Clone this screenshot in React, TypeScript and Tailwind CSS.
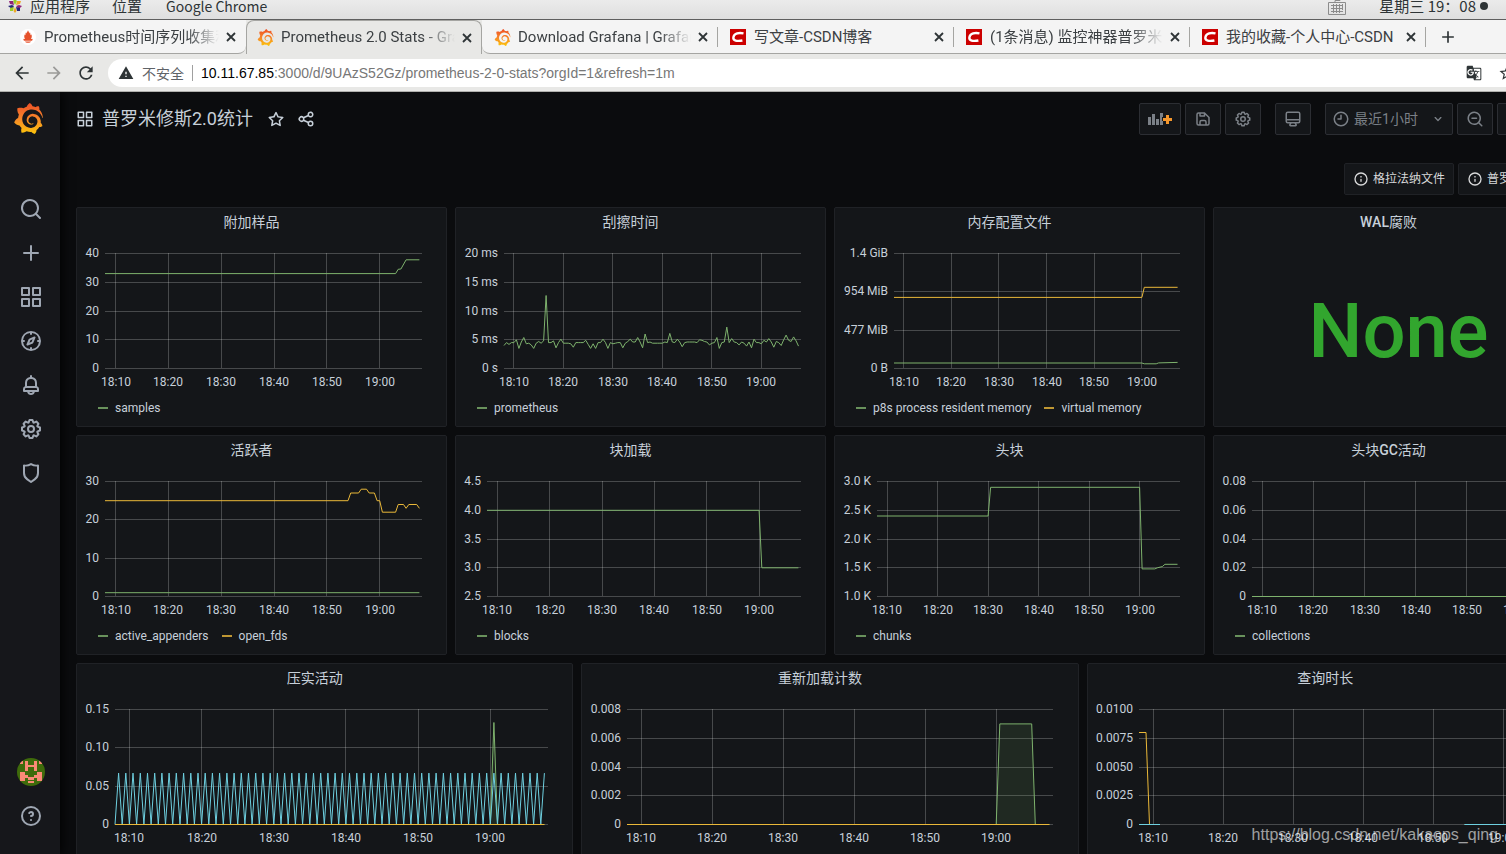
import React from "react";
import { SiGrafana } from "react-icons/si";
import { MdArrowBack, MdArrowForward, MdGTranslate, MdRefresh, MdStarBorder, MdWarning, MdAdd } from "react-icons/md";

const GREEN = "#7eb26d";
const YELLOW = "#eab839";
const BLUE = "#6ed0e0";

const icons = {
  search:
    "M21.71,20.29,18,16.61A9,9,0,1,0,16.61,18l3.68,3.68a1,1,0,0,0,1.42,0A1,1,0,0,0,21.71,20.29ZM11,18a7,7,0,1,1,7-7A7,7,0,0,1,11,18Z",
  searchMinus:
    "M21.71,20.29,18,16.61A9,9,0,1,0,16.61,18l3.68,3.68a1,1,0,0,0,1.42,0A1,1,0,0,0,21.71,20.29ZM11,18a7,7,0,1,1,7-7A7,7,0,0,1,11,18ZM14,10H8a1,1,0,0,0,0,2h6a1,1,0,0,0,0-2Z",
  plus: "M19,11H13V5a1,1,0,0,0-2,0v6H5a1,1,0,0,0,0,2h6v6a1,1,0,0,0,2,0V13h6a1,1,0,0,0,0-2Z",
  apps: "M10,13H3a1,1,0,0,0-1,1v7a1,1,0,0,0,1,1h7a1,1,0,0,0,1-1V14A1,1,0,0,0,10,13ZM9,20H4V15H9ZM21,2H14a1,1,0,0,0-1,1v7a1,1,0,0,0,1,1h7a1,1,0,0,0,1-1V3A1,1,0,0,0,21,2ZM20,9H15V4h5Zm1,4H14a1,1,0,0,0-1,1v7a1,1,0,0,0,1,1h7a1,1,0,0,0,1-1V14A1,1,0,0,0,21,13Zm-1,7H15V15h5ZM10,2H3A1,1,0,0,0,2,3v7a1,1,0,0,0,1,1h7a1,1,0,0,0,1-1V3A1,1,0,0,0,10,2ZM9,9H4V4H9Z",
  compass:
    "M12,2A10,10,0,1,0,22,12,10,10,0,0,0,12,2Zm1,17.93V19a1,1,0,0,0-2,0v.93A8,8,0,0,1,4.07,13H5a1,1,0,0,0,0-2H4.07A8,8,0,0,1,11,4.07V5a1,1,0,0,0,2,0V4.07A8,8,0,0,1,19.93,11H19a1,1,0,0,0,0,2h.93A8,8,0,0,1,13,19.93ZM15.14,7.55l-5,2.12a1,1,0,0,0-.52.52l-2.12,5a1,1,0,0,0,.21,1.1,1,1,0,0,0,.7.3.93.93,0,0,0,.4-.09l5-2.12a1,1,0,0,0,.52-.52l2.12-5a1,1,0,0,0-1.31-1.31Zm-2.49,5.1-2.28,1,1-2.28,2.28-1Z",
  bell: "M18,13.18V10a6,6,0,0,0-5-5.91V3a1,1,0,0,0-2,0V4.09A6,6,0,0,0,6,10v3.18A3,3,0,0,0,4,16v2a1,1,0,0,0,1,1H8.14a4,4,0,0,0,7.72,0H19a1,1,0,0,0,1-1V16A3,3,0,0,0,18,13.18ZM8,10a4,4,0,0,1,8,0v3H8Zm4,10a2,2,0,0,1-1.72-1h3.44A2,2,0,0,1,12,20Zm6-3H6V16a1,1,0,0,1,1-1H17a1,1,0,0,1,1,1Z",
  cog: "M21.32,9.55l-1.89-.63.89-1.78A1,1,0,0,0,20.13,6L18,3.87a1,1,0,0,0-1.15-.19l-1.78.89-.63-1.89A1,1,0,0,0,13.5,2h-3a1,1,0,0,0-.95.68L8.92,4.57,7.14,3.68A1,1,0,0,0,6,3.87L3.87,6a1,1,0,0,0-.19,1.15l.89,1.78-1.89.63A1,1,0,0,0,2,10.5v3a1,1,0,0,0,.68.95l1.89.63-.89,1.78A1,1,0,0,0,3.87,18L6,20.13a1,1,0,0,0,1.15.19l1.78-.89.63,1.89a1,1,0,0,0,.95.68h3a1,1,0,0,0,.95-.68l.63-1.89,1.78.89A1,1,0,0,0,18,20.13L20.13,18a1,1,0,0,0,.19-1.15l-.89-1.78,1.89-.63A1,1,0,0,0,22,13.5v-3A1,1,0,0,0,21.32,9.55ZM20,12.78l-1.2.4A2,2,0,0,0,17.64,16l.57,1.14-1.1,1.1L16,17.64a2,2,0,0,0-2.79,1.16l-.4,1.2H11.22l-.4-1.2A2,2,0,0,0,8,17.64l-1.14.57-1.1-1.1L6.36,16A2,2,0,0,0,5.2,13.18L4,12.78V11.22l1.2-.4A2,2,0,0,0,6.36,8L5.79,6.89l1.1-1.1L8,6.36A2,2,0,0,0,10.82,5.2l.4-1.2h1.56l.4,1.2A2,2,0,0,0,16,6.36l1.14-.57,1.1,1.1L17.64,8a2,2,0,0,0,1.16,2.79l1.2.4ZM12,8a4,4,0,1,0,4,4A4,4,0,0,0,12,8Zm0,6a2,2,0,1,1,2-2A2,2,0,0,1,12,14Z",
  shield:
    "M19.63,3.65a1,1,0,0,0-.84-.2,8,8,0,0,1-6.22-1.27,1,1,0,0,0-1.14,0A8,8,0,0,1,5.21,3.45a1,1,0,0,0-.84.2A1,1,0,0,0,4,4.43v7.45a9,9,0,0,0,3.77,7.33l3.65,2.6a1,1,0,0,0,1.16,0l3.65-2.6A9,9,0,0,0,20,11.88V4.43A1,1,0,0,0,19.63,3.65ZM18,11.88a7,7,0,0,1-2.93,5.7L12,19.77,8.93,17.58A7,7,0,0,1,6,11.88V5.58a10,10,0,0,0,6-1.39,10,10,0,0,0,6,1.39Z",
  question:
    "M11.29,15.29a1.58,1.58,0,0,0-.12.15.76.76,0,0,0-.09.18.64.64,0,0,0-.06.18,1.36,1.36,0,0,0,0,.2.84.84,0,0,0,.08.38.9.9,0,0,0,.54.54.94.94,0,0,0,.76,0,.9.9,0,0,0,.54-.54A1,1,0,0,0,13,16a1,1,0,0,0-.29-.71A1,1,0,0,0,11.29,15.29ZM12,2A10,10,0,1,0,22,12,10,10,0,0,0,12,2Zm0,18a8,8,0,1,1,8-8A8,8,0,0,1,12,20ZM12,7A3,3,0,0,0,9.4,8.5a1,1,0,1,0,1.73,1A1,1,0,0,1,12,9a1,1,0,0,1,0,2,1,1,0,1,0,0,2,3,3,0,0,0,0-6Z",
  star: "M22,9.67A1,1,0,0,0,21.14,9l-5.69-.83L12.9,3a1,1,0,0,0-1.8,0L8.55,8.16,2.86,9a1,1,0,0,0-.81.68,1,1,0,0,0,.25,1l4.13,4-1,5.68A1,1,0,0,0,6.9,21.44L12,18.77l5.1,2.67a.93.93,0,0,0,.46.12,1,1,0,0,0,.59-.19,1,1,0,0,0,.4-1l-1-5.68,4.13-4A1,1,0,0,0,22,9.67Zm-6.15,4a1,1,0,0,0-.29.88l.72,4.2-3.76-2a1.06,1.06,0,0,0-.94,0l-3.76,2,.72-4.2a1,1,0,0,0-.29-.88l-3-3,4.21-.61a1,1,0,0,0,.76-.55L12,5.7l1.88,3.82a1,1,0,0,0,.76.55l4.21.61Z",
  share:
    "M18,14a4,4,0,0,0-3.08,1.48l-5.1-2.35a3.64,3.64,0,0,0,0-2.26l5.1-2.35A4,4,0,1,0,14,6a4.17,4.17,0,0,0,.07.71L8.79,9.14a4,4,0,1,0,0,5.72l5.28,2.43A4.17,4.17,0,0,0,14,18a4,4,0,1,0,4-4ZM18,4a2,2,0,1,1-2,2A2,2,0,0,1,18,4ZM6,14a2,2,0,1,1,2-2A2,2,0,0,1,6,14Zm12,6a2,2,0,1,1,2-2A2,2,0,0,1,18,20Z",
  save: "M20.71,9.29l-6-6a1,1,0,0,0-.32-.21A1.09,1.09,0,0,0,14,3H6A3,3,0,0,0,3,6V18a3,3,0,0,0,3,3H18a3,3,0,0,0,3-3V10A1,1,0,0,0,20.71,9.29ZM9,5h4V7H9Zm6,14H9V16a1,1,0,0,1,1-1h4a1,1,0,0,1,1,1Zm4-1a1,1,0,0,1-1,1H17V16a3,3,0,0,0-3-3H10a3,3,0,0,0-3,3v3H6a1,1,0,0,1-1-1V6A1,1,0,0,1,6,5H7V8A1,1,0,0,0,8,9h6a1,1,0,0,0,1-1V6.41l4,4Z",
  monitor:
    "M19,2H5A3,3,0,0,0,2,5V15a3,3,0,0,0,3,3H7.64l-.58,1a2,2,0,0,0,0,2,2,2,0,0,0,1.75,1h6.46A2,2,0,0,0,17,21a2,2,0,0,0,0-2l-.59-1H19a3,3,0,0,0,3-3V5A3,3,0,0,0,19,2ZM8.77,20,10,18H14l1.2,2ZM20,15a1,1,0,0,1-1,1H5a1,1,0,0,1-1-1V14H20Zm0-3H4V5A1,1,0,0,1,5,4H19a1,1,0,0,1,1,1Z",
  clock:
    "M12,2A10,10,0,1,0,22,12,10,10,0,0,0,12,2Zm0,18a8,8,0,1,1,8-8A8,8,0,0,1,12,20ZM12,6a1,1,0,0,0-1,1v4H8a1,1,0,0,0,0,2h4a1,1,0,0,0,1-1V7A1,1,0,0,0,12,6Z",
  angleDown:
    "M17,9.17a1,1,0,0,0-1.41,0L12,12.71,8.46,9.17a1,1,0,0,0-1.41,0,1,1,0,0,0,0,1.42l4.24,4.24a1,1,0,0,0,1.42,0L17,10.59A1,1,0,0,0,17,9.17Z",
  info: "M12,2A10,10,0,1,0,22,12,10,10,0,0,0,12,2Zm0,18a8,8,0,1,1,8-8A8,8,0,0,1,12,20Zm0-8.5a1,1,0,0,0-1,1v3a1,1,0,0,0,2,0v-3A1,1,0,0,0,12,11.5Zm0-4a1.25,1.25,0,1,0,1.25,1.25A1.25,1.25,0,0,0,12,7.5Z",
};

const Icon = ({ name, size = 16 }: { name: keyof typeof icons; size?: number }) => (
  <svg width={size} height={size} viewBox="0 0 24 24" fill="currentColor" className="shrink-0" aria-hidden="true">
    <path d={icons[name]} />
  </svg>
);

const PrometheusIcon = () => (
  <svg width="16" height="16" viewBox="0 0 16 16" aria-hidden="true">
    <circle cx="8" cy="8" r="8" fill="#fff" />
    <path
      fill="#e6522c"
      d="M8 1.2c.3 1.3 1.2 1.9 1.3 3.3.5-.4.5-1 .4-1.4.9 1.2.5 2.2 1 3.1.4-.2.6-.6.6-1 .7 1.3.8 3.5-.7 5.3H5.4C3.9 8.7 4.1 6.8 4.7 5.2c0 .4.2.8.6 1 .5-1-.1-1.9.9-3.2-.1.5 0 1.1.5 1.4.2-1.3 1-1.9 1.3-3.2zM3.2 9.7c1 .5 8.6.5 9.6 0l-.7 2H3.9zM5 12.4h6c-.3 1.9-5.7 1.9-6 0z"
    />
  </svg>
);

const GrafanaIcon = ({ size }: { size: number }) => <SiGrafana size={size} fill="url(#grafana)" aria-hidden="true" />;

const CsdnIcon = () => (
  <svg width="16" height="16" viewBox="0 0 16 16" aria-hidden="true">
    <path fill="#c00" d="M0 0h16v16H0z" />
    <path fill="none" stroke="#fff" strokeWidth="2.4" d="M13.5 4.4C9 3.5 4.3 4.3 3.4 8.2c-.6 3.6 3.6 4.3 9 3.3" />
  </svg>
);

const tabs = [
  { title: "Prometheus时间序列收集利器", icon: <PrometheusIcon />, fade: true },
  { title: "Prometheus 2.0 Stats - Grafana", icon: <GrafanaIcon size={17} />, fade: true, active: true },
  { title: "Download Grafana | Grafana Labs", icon: <GrafanaIcon size={17} />, fade: true },
  { title: "写文章-CSDN博客", icon: <CsdnIcon /> },
  { title: "(1条消息) 监控神器普罗米修斯", icon: <CsdnIcon />, fade: true },
  { title: "我的收藏-个人中心-CSDN", icon: <CsdnIcon /> },
];

const SystemBar = () => (
  <div className="h-5 shrink-0 overflow-hidden border-b border-[#5f5f5f] bg-linear-to-b from-[#ebebeb] to-[#dfdfdf] text-[15px] text-[#2e3436]">
    <div className="-mt-2 flex h-7 items-center pl-2 pr-[112px] font-['Noto_Sans_CJK_SC',sans-serif] leading-6">
      <svg width="14" height="14" viewBox="0 0 14 14" aria-hidden="true">
        <path fill="#9ccd2a" d="M7 0l2 2-2 4-2-4z" />
        <path fill="#932279" d="M1 2h4l1 4-4-1z" />
        <path fill="#262577" d="M0 7l4-1 2 1-2 3z" />
        <path fill="#efa724" d="M9 2h4l-1 3-4 1z" />
        <path fill="#932279" d="M14 7l-3 3-3-3 3-1z" />
        <path fill="#9ccd2a" d="M2 12V9l4-1-1 4z" />
        <path fill="#262577" d="M12 12H9L8 8l4 1z" />
        <path fill="#efa724" d="M7 14l-1.5-2L7 8l1.5 4z" />
      </svg>
      <button type="button" className="ml-2">应用程序</button>
      <button type="button" className="ml-[22px]">位置</button>
      <button type="button" className="ml-6 text-sm leading-6">Google Chrome</button>
      <div className="ml-auto flex items-center gap-8">
        <svg width="20" height="18" viewBox="0 0 20 18" fill="none" stroke="#8c8c8c" aria-hidden="true">
          <path d="M1.5 5.5h17v12h-17zM4 8.5h12M4 11.5h12M4 14.5h12M6.5 7v9M9.5 7v9M12.5 7v9M15.5 7v6M8 5V3.5h5V1" />
        </svg>
        <span className="flex items-center gap-1">
          星期三 19：08
          <span className="size-2 rounded-full bg-[#2e3436]" />
        </span>
      </div>
    </div>
  </div>
);

const TabStrip = () => (
  <div className="flex h-[34px] shrink-0 bg-[#e8e8e6] font-['Roboto','Noto_Sans_CJK_SC',sans-serif] text-[15px] text-[#3c4043]">
    <div className="w-2 border-b border-[#a5a5a2] bg-[#f4f4f4]" />
    {tabs.map((tab, i) => (
      <div
        key={i}
        className={
          tab.active
            ? "flex w-[236px] shrink-0 items-center rounded-t-lg border border-b-0 border-[#a5a5a2] bg-[#e8e8e6] pl-[10px] pr-[7px]"
            : "flex shrink-0 items-center border-b border-[#a5a5a2] bg-[#f4f4f4] pl-3 pr-2 pt-px" +
              (i === 0 ? " w-[238px] rounded-br-lg" : " w-[236px]") +
              (i === 2 ? " rounded-bl-lg" : "")
        }
      >
        <span className="flex w-6 shrink-0">{tab.icon}</span>
        <span
          className={
            "min-w-0 flex-1 overflow-hidden whitespace-nowrap" +
            (tab.fade ? " [mask-image:linear-gradient(to_right,black_calc(100%-32px),transparent)]" : "")
          }
        >
          {tab.title}
        </span>
        <button type="button" aria-label="关闭" className="ml-[5px] flex w-[14px] justify-center text-[#2e3436]">
          <svg width="10" height="10" viewBox="0 0 10 10" stroke="currentColor" strokeWidth="1.8" aria-hidden="true">
            <path d="M1 1l8 8M9 1L1 9" />
          </svg>
        </button>
        <span className={i > 1 ? "ml-[7px] -mr-2 h-5 w-px bg-[#a5a5a2]" : "hidden"} />
      </div>
    ))}
    <div className="flex flex-1 items-center border-b border-[#a5a5a2] bg-[#f4f4f4] pl-3">
      <button type="button" aria-label="新标签页" className="text-[#2e3436]">
        <MdAdd size={20} />
      </button>
    </div>
  </div>
);

const AddressBar = () => (
  <div className="flex h-[38px] shrink-0 items-center border-b border-[#b0b0ad] bg-[#e8e8e6] pl-3 pr-[76px] text-[#2e3436]">
    <button type="button" aria-label="后退"><MdArrowBack size={20} /></button>
    <button type="button" aria-label="前进" className="ml-3 text-[#9a9a98]"><MdArrowForward size={20} /></button>
    <button type="button" aria-label="重新加载" className="ml-3"><MdRefresh size={20} /></button>
    <div className="ml-3 flex h-7 flex-1 items-center rounded-full bg-white pl-[10px] pr-2">
      <MdWarning size={16} />
      <span className="ml-2 font-['Noto_Sans_CJK_SC',sans-serif] text-sm leading-5 text-[#5f6368]">不安全</span>
      <span className="mx-2 h-4 w-px bg-[#a0a0a0]" />
      <label htmlFor="url" className="font-['Liberation_Sans',sans-serif] text-sm text-black">10.11.67.85</label>
      <input
        id="url"
        className="min-w-0 flex-1 bg-transparent font-['Liberation_Sans',sans-serif] text-sm text-[#777] outline-none"
        defaultValue=":3000/d/9UAzS52Gz/prometheus-2-0-stats?orgId=1&refresh=1m"
      />
      <button type="button" aria-label="翻译此页"><MdGTranslate size={16} /></button>
      <button type="button" aria-label="收藏" className="ml-4"><MdStarBorder size={18} /></button>
    </div>
  </div>
);

const Sidebar = () => (
  <nav className="z-10 flex w-[60px] shrink-0 flex-col bg-[#16171b] pb-4 text-[#9fa7b3] shadow-[2px_0_10px_rgba(0,0,0,0.9)]">
    <a href="#home" aria-label="Grafana" className="flex h-[95px] pl-[13px] pt-[11px]">
      <GrafanaIcon size={31} />
    </a>
    {(["search", "plus", "apps", "compass", "bell", "cog", "shield"] as const).map((name) => (
      <a key={name} href={"#" + name} aria-label={name} className="flex h-11 items-center justify-center pl-[2px]">
        <Icon name={name} size={24} />
      </a>
    ))}
    <a href="#profile" aria-label="profile" className="mt-auto flex h-11 items-center justify-center pl-[2px]">
      <svg width="28" height="28" viewBox="0 0 28 28" className="rounded-full" aria-hidden="true">
        <path fill="#3f6b0b" d="M0 0h28v28H0z" />
        <path
          fill="#fa8a76"
          d="M3 3h3v3H3zM22 3h3v3h-3zM8 3h3v4h6V3h3v10h-3V9h-6v4H8zM3 14h5v3h3v2h6v-2h3v-3h5v9h-5v-3h-3v2h-6v-2H8v3H3zM11 23h6v2h-6z"
        />
      </svg>
    </a>
    <a href="#help" aria-label="help" className="flex h-11 items-center justify-center pl-[2px]">
      <Icon name="question" size={24} />
    </a>
  </nav>
);

const toolButton =
  "flex h-8 items-center justify-center rounded-xs border border-[#2c2e33] bg-[#141619] text-[#7b8087]";

const Toolbar = () => (
  <header className="flex h-[54px] items-center text-[#c7d0d9]">
    <Icon name="apps" size={18} />
    <h1 className="ml-2 text-lg">普罗米修斯2.0统计</h1>
    <button type="button" aria-label="收藏仪表板" className="ml-[14px]"><Icon name="star" size={18} /></button>
    <button type="button" aria-label="分享" className="ml-3"><Icon name="share" size={18} /></button>
    <div className="ml-auto flex gap-1">
      <button type="button" aria-label="添加面板" className={toolButton + " w-[42px]"}>
        <svg width="24" height="16" viewBox="0 0 24 16" aria-hidden="true">
          <path fill="currentColor" d="M0 6h3v8H0zM4 3h3v11H4zM8 8h3v6H8zM12 2h3v4h-1v4h1v4h-3z" />
          <path fill="#f5972c" d="M18 4h3v3h3v3h-3v3h-3v-3h-3V7h3z" />
        </svg>
      </button>
      <button type="button" aria-label="保存" className={toolButton + " w-9"}><Icon name="save" size={18} /></button>
      <button type="button" aria-label="设置" className={toolButton + " w-9"}><Icon name="cog" size={18} /></button>
      <button type="button" aria-label="循环视图" className={toolButton + " mx-[10px] w-9"}><Icon name="monitor" size={18} /></button>
      <button type="button" className={toolButton + " w-32 text-sm"}>
        <Icon name="clock" size={18} />
        <span className="ml-1">最近1小时</span>
        <span className="ml-3"><Icon name="angleDown" /></span>
      </button>
      <button type="button" aria-label="缩小" className={toolButton + " w-9"}><Icon name="searchMinus" size={18} /></button>
      <button type="button" aria-label="刷新" className={toolButton + " w-[87px]"}><Icon name="angleDown" /></button>
    </div>
  </header>
);

const DashLinks = () => (
  <div className="flex justify-end gap-1 pb-3 pt-[17px] text-xs text-[#d8d9da]">
    <a href="#docs" className="flex h-8 w-[110px] items-center justify-center gap-1 rounded-xs border border-[#202226] bg-[#141619]">
      <Icon name="info" />
      格拉法纳文件
    </a>
    <a href="#prometheus" className="flex h-8 w-[126px] items-center gap-1 rounded-xs border border-[#202226] bg-[#141619] pl-2">
      <Icon name="info" />
      普罗米修斯文件
    </a>
  </div>
);

type Series = { color: string; points: number[][]; fill?: boolean };

type ChartProps = {
  width: number;
  left: number;
  right: number;
  min?: number;
  max: number;
  ticks: string[];
  series: Series[];
};

// time runs in minutes from 18:08, ticks go from top to bottom
const TOP = 17;
const PLOT = 115;
const times = ["18:10", "18:20", "18:30", "18:40", "18:50", "19:00"];

const Chart = ({ width, left, right, min = 0, max, ticks, series }: ChartProps) => {
  const x = (t: number) => left + (t * (right - left)) / 60;
  const y = (v: number) => TOP + 0.5 + PLOT * (1 - (v - min) / (max - min));
  return (
    <svg
      viewBox={`0 0 ${width} 158`}
      preserveAspectRatio="xMinYMin meet"
      className="block h-[158px] w-full"
      fill="#c7d0d9"
      fontSize="12"
      role="img"
    >
      {ticks.map((label, i) => {
        const ty = TOP + Math.round((PLOT * i) / (ticks.length - 1));
        return (
          <g key={label}>
            <path d={`M${left} ${ty + 0.5}H${right}`} stroke="#fff" strokeOpacity="0.22" />
            <text x={left - 6} y={ty + 4} textAnchor="end">{label}</text>
          </g>
        );
      })}
      {times.map((label, i) => {
        const tx = x(2 + i * 10);
        return (
          <g key={label}>
            <path d={`M${Math.floor(tx) + 0.5} ${TOP}V${TOP + PLOT}`} stroke="#fff" strokeOpacity="0.22" />
            <text x={Math.round(tx)} y="150" textAnchor="middle">{label}</text>
          </g>
        );
      })}
      {series.map((s, i) => {
        const line = s.points.map(([t, v]) => `${x(t).toFixed(1)},${y(v).toFixed(1)}`).join(" ");
        return (
          <g key={i}>
            {s.fill && <polygon points={line} fill={s.color} fillOpacity="0.12" />}
            <polyline points={line} fill="none" stroke={s.color} />
          </g>
        );
      })}
    </svg>
  );
};

type PanelProps = { title: React.ReactNode; legend?: { color: string; name: string }[]; children: React.ReactNode };

const Panel = ({ title, legend = [], children }: PanelProps) => (
  <section className="flex h-[220px] min-w-0 flex-col rounded-xs border border-[#202226] bg-[#141619] pb-1">
    <h2 className="h-7 pr-5 text-center text-sm leading-7 text-[#c7d0d9]">{title}</h2>
    {children}
    {legend.length > 0 && (
      <ul className="flex h-7 items-center gap-[13px] pl-[21px] text-xs text-[#c7d0d9]">
        {legend.map((item) => (
          <li key={item.name} className="flex items-center gap-[7px]">
            <span className="h-[2px] w-[10px] opacity-80" style={{ background: item.color }} />
            {item.name}
          </li>
        ))}
      </ul>
    )}
  </section>
);

const scrape = [
  4.0, 4.5, 4.2, 4.5, 4.5, 5.0, 3.5, 4.6, 5.4, 4.3, 4.4, 4.1, 3.5, 4.4, 4.7, 4.4, 4.8, 12.7, 4.5, 4.5,
  4.8, 3.6, 4.5, 5.1, 4.4, 4.4, 4.4, 4.3, 3.7, 4.5, 4.5, 4.5, 4.5, 4.9, 4.2, 3.5, 4.3, 3.5, 4.5, 4.5,
  5.1, 4.5, 3.5, 4.5, 4.3, 4.4, 4.5, 4.5, 3.6, 4.4, 4.7, 5.1, 4.6, 4.6, 5.4, 4.6, 3.6, 6.0, 4.5, 4.6,
  4.4, 4.4, 4.4, 4.4, 4.4, 4.6, 4.5, 6.1, 4.6, 4.5, 5.1, 4.6, 3.8, 4.5, 4.6, 4.6, 4.6, 4.6, 4.5, 5.0,
  4.9, 4.7, 4.6, 4.1, 4.4, 4.5, 5.4, 3.5, 4.5, 4.6, 7.2, 4.5, 5.2, 4.6, 4.5, 4.1, 4.6, 4.4, 3.9, 4.6,
  3.6, 5.1, 4.5, 4.5, 4.3, 4.9, 4.6, 5.2, 4.6, 3.7, 4.7, 4.5, 4.0, 5.0, 5.8, 4.9, 4.7, 5.5, 4.8, 3.9,
].map((v, i) => [i / 2, v]);

const compaction = Array.from({ length: 120 }, (_, i) => [i / 2, i % 2 ? 0.067 : 0]);

const Dashboard = () => (
  <main className="min-w-0 flex-1 bg-[#0b0c0e] px-4">
    <Toolbar />
    <DashLinks />
    <div className="grid grid-cols-4 gap-2">
      <Panel title="附加样品" legend={[{ color: GREEN, name: "samples" }]}>
        <Chart
          width={369} left={28} right={345} max={40} ticks={["40", "30", "20", "10", "0"]}
          series={[{ color: GREEN, points: [[0, 33], [55, 33], [55.5, 34.5], [56, 34.6], [57, 37.8], [59.5, 37.8]] }]}
        />
      </Panel>
      <Panel title="刮擦时间" legend={[{ color: GREEN, name: "prometheus" }]}>
        <Chart
          width={369} left={48} right={345} max={20} ticks={["20 ms", "15 ms", "10 ms", "5 ms", "0 s"]}
          series={[{ color: GREEN, points: scrape }]}
        />
      </Panel>
      <Panel
        title="内存配置文件"
        legend={[{ color: GREEN, name: "p8s process resident memory" }, { color: YELLOW, name: "virtual memory" }]}
      >
        <Chart
          width={369} left={59} right={345} max={1431} ticks={["1.4 GiB", "954 MiB", "477 MiB", "0 B"]}
          series={[
            { color: GREEN, points: [[0, 68], [52, 68], [52.5, 58], [55, 58], [55.5, 70], [59.5, 76]] },
            { color: YELLOW, points: [[0, 885], [52, 885], [52.5, 1010], [59.5, 1010]] },
          ]}
        />
      </Panel>
      <Panel title={<><span className="font-medium">WAL</span>腐败</>}>
        <p className="flex flex-1 items-center justify-center pt-1 text-[76px] leading-none font-medium text-[#32a62e]">None</p>
      </Panel>

      <Panel title="活跃者" legend={[{ color: GREEN, name: "active_appenders" }, { color: YELLOW, name: "open_fds" }]}>
        <Chart
          width={369} left={28} right={345} max={30} ticks={["30", "20", "10", "0"]}
          series={[
            { color: GREEN, points: [[0, 1], [59.5, 1]] },
            {
              color: YELLOW,
              points: [
                [0, 25], [46, 25], [46.5, 27], [48, 27], [48.5, 28], [49.5, 28], [50, 27], [51, 27], [51.5, 25],
                [52, 25], [52.5, 22], [55, 22], [55.5, 24], [56.5, 24], [57, 23], [57.5, 24], [59, 24], [59.5, 23],
              ],
            },
          ]}
        />
      </Panel>
      <Panel title="块加载" legend={[{ color: GREEN, name: "blocks" }]}>
        <Chart
          width={369} left={31} right={345} min={2.5} max={4.5} ticks={["4.5", "4.0", "3.5", "3.0", "2.5"]}
          series={[{ color: GREEN, points: [[0, 4], [52, 4], [52.5, 3], [59.5, 3]] }]}
        />
      </Panel>
      <Panel title="头块" legend={[{ color: GREEN, name: "chunks" }]}>
        <Chart
          width={369} left={42} right={345} min={1} max={3} ticks={["3.0 K", "2.5 K", "2.0 K", "1.5 K", "1.0 K"]}
          series={[
            {
              color: GREEN,
              points: [[0, 2.4], [22, 2.4], [22.5, 2.9], [52, 2.9], [52.5, 1.48], [55, 1.48], [55.5, 1.5], [56.5, 1.52], [57, 1.56], [59.5, 1.56]],
            },
          ]}
        />
      </Panel>
      <Panel
        title={<>头块<span className="font-medium">GC</span>活动</>}
        legend={[{ color: GREEN, name: "collections" }]}
      >
        <Chart
          width={369} left={38} right={345} max={0.08} ticks={["0.08", "0.06", "0.04", "0.02", "0"]}
          series={[{ color: GREEN, points: [[0, 0], [59.5, 0]] }]}
        />
      </Panel>
    </div>

    <div className="mt-2 grid grid-cols-3 gap-2">
      <Panel title="压实活动">
        <Chart
          width={495} left={38} right={471} max={0.15} ticks={["0.15", "0.10", "0.05", "0"]}
          series={[
            { color: GREEN, points: [[0, 0], [52, 0], [52.5, 0.133], [53, 0], [59.5, 0]], fill: true },
            { color: BLUE, points: compaction },
            { color: YELLOW, points: [[0, 0], [59.5, 0]] },
          ]}
        />
      </Panel>
      <Panel title="重新加载计数">
        <Chart
          width={495} left={45} right={471} max={0.008} ticks={["0.008", "0.006", "0.004", "0.002", "0"]}
          series={[
            { color: GREEN, points: [[0, 0], [52, 0], [52.5, 0.007], [57, 0.007], [57.5, 0], [59.5, 0]], fill: true },
            { color: YELLOW, points: [[0, 0], [59.5, 0]] },
          ]}
        />
      </Panel>
      <Panel title="查询时长">
        <Chart
          width={495} left={51} right={471} max={0.01} ticks={["0.0100", "0.0075", "0.0050", "0.0025", "0"]}
          series={[
            { color: YELLOW, points: [[0, 0.008], [1, 0.008], [1.5, 0], [3, 0]] },
            { color: GREEN, points: [[46.5, 0], [59.5, 0]] },
            { color: BLUE, points: [[0, 0], [3, 0]] },
            { color: BLUE, points: [[46.5, 0], [59.5, 0]] },
          ]}
        />
      </Panel>
    </div>
  </main>
);

const App = () => {
  return (
    <div className="relative h-screen overflow-hidden bg-[#0b0c0e]">
      <svg width="0" height="0" className="absolute" aria-hidden="true">
        <linearGradient id="grafana" x1="0" y1="1" x2="0" y2="0">
          <stop offset="0" stopColor="#fcc50a" />
          <stop offset="0.5" stopColor="#f6862a" />
          <stop offset="1" stopColor="#ee4f27" />
        </linearGradient>
      </svg>
      {/* the window reaches past the right edge of the screen */}
      <div className="flex h-full w-[calc(100%+94px)] flex-col">
        <SystemBar />
        <TabStrip />
        <AddressBar />
        <div className="flex min-h-0 flex-1 overflow-hidden font-['Roboto','Noto_Sans_CJK_SC',sans-serif]">
          <Sidebar />
          <Dashboard />
        </div>
      </div>
      <p className="absolute right-2 bottom-[7px] font-['Liberation_Sans',sans-serif] text-base text-white/60">
        https://blog.csdn.net/kakaops_qing
      </p>
    </div>
  );
};

export default App;
